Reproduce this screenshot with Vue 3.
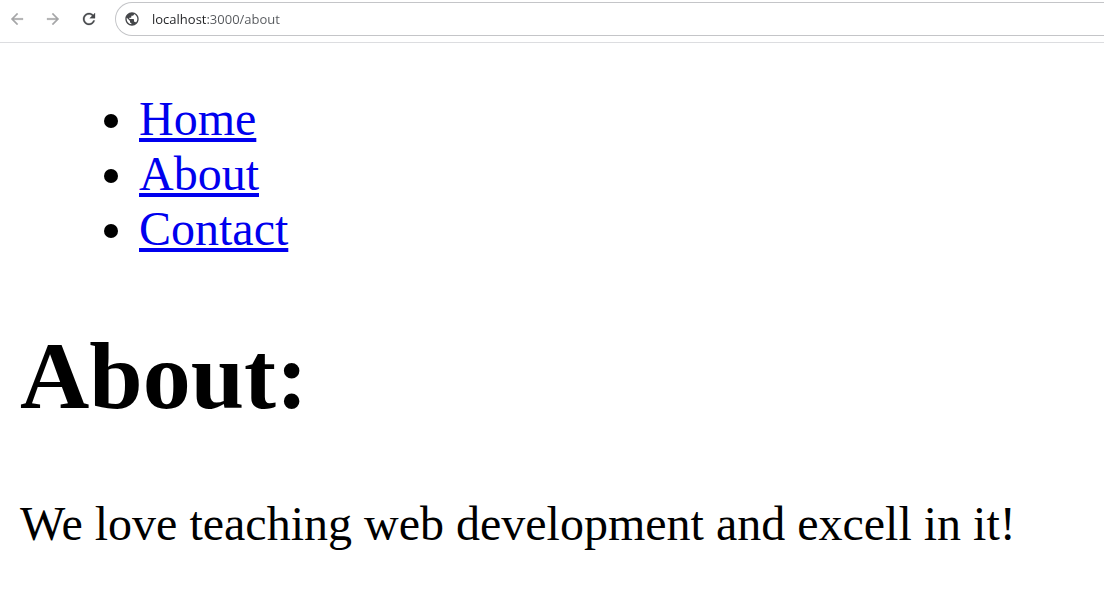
<script setup>
import { ref } from 'vue'

const address = ref('localhost:3000/about')
const links = [
  { label: 'Home', href: '/' },
  { label: 'About', href: '/about' },
  { label: 'Contact', href: '/contact' },
]
</script>

<template>
  <div class="browser">
    <header class="toolbar">
      <button class="nav-button" type="button" aria-label="Back" disabled>
        <svg viewBox="0 0 24 24"><path d="M20 11H7.830l5.590-5.590L12 4l-8 8 8 8 1.410-1.410L7.830 13H20v-2z" /></svg>
      </button>
      <button class="nav-button" type="button" aria-label="Forward" disabled>
        <svg viewBox="0 0 24 24"><path d="M12 4l-1.410 1.410L16.170 11H4v2h12.170l-5.580 5.590L12 20l8-8z" /></svg>
      </button>
      <button class="nav-button reload" type="button" aria-label="Reload">
        <svg viewBox="0 0 24 24"><path d="M17.650 6.350C16.200 4.900 14.210 4 12 4c-4.420 0-7.990 3.580-7.990 8s3.570 8 7.990 8c3.730 0 6.840-2.550 7.730-6h-2.080c-.82 2.330-3.040 4-5.650 4-3.310 0-6-2.690-6-6s2.690-6 6-6c1.660 0 3.140.69 4.220 1.780L13 11h7V4l-2.350 2.350z" /></svg>
      </button>
      <div class="address">
        <svg class="globe" viewBox="0 0 24 24" aria-hidden="true">
          <path d="M12 2C6.480 2 2 6.480 2 12s4.480 10 10 10 10-4.480 10-10S17.520 2 12 2zm-1 17.930c-3.950-.49-7-3.850-7-7.930 0-.62.08-1.210.21-1.790L9 15v1c0 1.100.9 2 2 2v1.930zm6.900-2.540c-.26-.81-1-1.390-1.900-1.390h-1v-3c0-.55-.45-1-1-1H8v-2h2c.55 0 1-.45 1-1V7h2c1.100 0 2-.9 2-2v-.41c2.930 1.190 5 4.060 5 7.410 0 2.080-.8 3.970-2.100 5.390z" />
        </svg>
        <input v-model="address" class="url" type="text" aria-label="Address" spellcheck="false">
      </div>
    </header>
    <main class="page">
      <nav>
        <ul>
          <li v-for="link in links" :key="link.label"><a :href="link.href">{{ link.label }}</a></li>
        </ul>
      </nav>
      <h1>About:</h1>
      <p>We love teaching web development and excell in it!</p>
    </main>
  </div>
</template>

<style>
body {
  background: #fff;
}
</style>

<style scoped>
.toolbar {
  display: flex;
  align-items: center;
  height: 43px;
  padding: 0 0 4px 7px;
  box-sizing: border-box;
  border-bottom: 1px solid #dcdde0;
}
.nav-button {
  width: 20px;
  height: 20px;
  margin-right: 16px;
  padding: 1px;
  border: 0;
  background: none;
  color: #a5a6a8;
}
.reload {
  color: #45474a;
}
.nav-button svg {
  display: block;
  width: 18px;
  height: 18px;
  fill: currentColor;
  stroke: currentColor;
  stroke-width: 0.4;
}
.address {
  display: flex;
  flex: 1;
  align-items: center;
  height: 34px;
  box-sizing: border-box;
  padding-left: 8px;
  border: 1px solid #c4c5c8;
  border-right: 0;
  border-radius: 17px 0 0 17px;
}
.globe {
  width: 16px;
  height: 16px;
  fill: #45474a;
}
.url {
  flex: 1;
  min-width: 0;
  margin-left: 12px;
  padding: 0;
  border: 0;
  outline: 0;
  font-family: "Open Sans", sans-serif;
  font-size: 13px;
  line-height: 20px;
  color: transparent;
  background: linear-gradient(90deg, #202124 54px, #54575b 54px);
  background-clip: text;
}
.page {
  padding: 48px 20px 40px;
  font-family: "Liberation Serif", serif;
  font-size: 48px;
  line-height: 55px;
  color: #000;
}
ul {
  margin: 0;
  padding-left: 119px;
}
a {
  color: #0000ee;
}
h1 {
  margin: 65px 0;
  font-size: 96px;
  line-height: 110px;
}
p {
  margin: 0;
}
</style>
